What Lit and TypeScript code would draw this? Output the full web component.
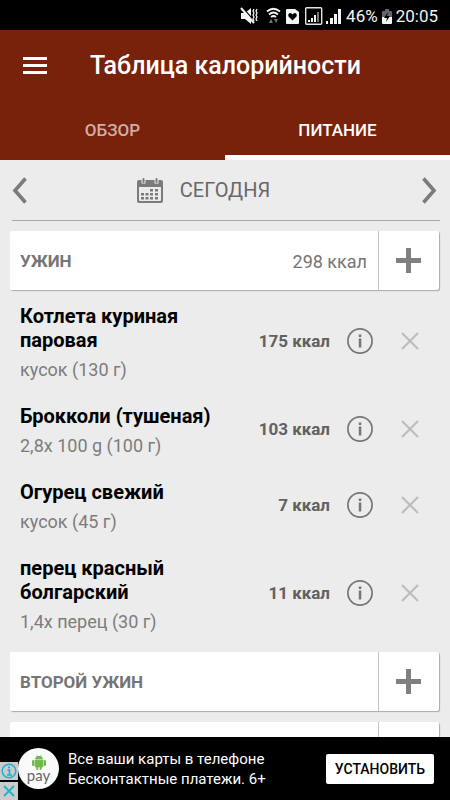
import { LitElement, html, svg, css, nothing } from "lit";
import { customElement, property } from "lit/decorators.js";

interface Food {
  name: string;
  portion: string;
  kcal: number;
}

const dinner: Food[] = [
  { name: "Котлета куриная паровая", portion: "кусок (130 г)", kcal: 175 },
  { name: "Брокколи (тушеная)", portion: "2,8x 100 g (100 г)", kcal: 103 },
  { name: "Огурец свежий", portion: "кусок (45 г)", kcal: 7 },
  { name: "перец красный болгарский", portion: "1,4x перец (30 г)", kcal: 11 },
];

const buttonReset = css`
  * {
    box-sizing: border-box;
  }
  button {
    margin: 0;
    padding: 0;
    border: 0;
    background: none;
    color: inherit;
    font: inherit;
    cursor: pointer;
    display: flex;
    align-items: center;
    justify-content: center;
  }
  svg {
    display: block;
    flex: none;
  }
`;

@customElement("status-bar")
export class StatusBar extends LitElement {
  static styles = css`
    :host {
      display: flex;
      align-items: center;
      justify-content: flex-end;
      flex: none;
      box-sizing: border-box;
      height: 30px;
      padding: 2px 12px 0 0;
      background: #000;
      color: #f4f4f4;
      font-size: 17px;
      line-height: 28px;
    }
    .icons {
      display: block;
      margin-right: 4px;
    }
    .battery {
      display: block;
      margin: 0 4px;
    }
  `;

  render() {
    return html`
      <svg class="icons" width="102" height="18" viewBox="0 0 102 18" fill="#f4f4f4" aria-hidden="true">
        <path d="M1 6h4l6-5v16l-6-5H1z" />
        <path d="M2 0l13 15" stroke="#000" stroke-width="1.500" />
        <path d="M1 1l13 15" stroke="#f4f4f4" stroke-width="2" />
        <path d="M14 2l-1 2 1 2-1 2 1 2-1 2 1 2M17 2l-1 2 1 2-1 2 1 2-1 2 1 2" fill="none" stroke="#f4f4f4" stroke-width="1.3" />
        <g fill="none" stroke="#f4f4f4" stroke-width="1.7">
          <path d="M27 4.500q6.500-5.500 13 0" />
          <path d="M29 7.500q4.500-4 9 0" />
          <path d="M31 10q2.500-2 5 0" />
        </g>
        <path d="M31 12l2 4h-4zM36 16l-2-4h4z" fill="#777" />
        <path d="M47 2h8l4 3v11q0 1-1 1H47q-1 0-1-1V3q0-1 1-1z" />
        <path d="M52.500 13.500L48.500 9.500q-1-3 1.500-3.500 1.700 0 2.500 1.500.8-1.500 2.500-1.500 2.500.5 1.500 3.500z" fill="#000" />
        <rect x="65.700" y="0.700" width="16" height="16.500" rx="1" fill="none" stroke="#e4e4e4" stroke-width="1.400" />
        <path d="M68 15v-2h2v2zM71 15v-4h2v4zM74 15V8h2v7z" />
        <path d="M77 15V5h2v10z" fill="#777" />
        <path d="M86 17v-3h2v3zM90 17v-6h3v6zM94 17V7h3v10zM98 17V2h3v15z" />
      </svg>
      <span>46%</span>
      <svg class="battery" width="10" height="15" viewBox="0 0 10 15" aria-hidden="true">
        <path d="M3 0h4v2h2q1 0 1 1v5H0V3q0-1 1-1h2z" fill="#666" />
        <path d="M0 8h10v6q0 1-1 1H1q-1 0-1-1z" fill="#f4f4f4" />
        <path d="M6 3L2 9h3l-1 4 4-6H5z" fill="#000" />
      </svg>
      <span>20:05</span>
    `;
  }
}

@customElement("meal-card")
export class MealCard extends LitElement {
  @property() name = "";
  @property({ type: Number }) total?: number;

  static styles = [
    buttonReset,
    css`
      :host {
        display: flex;
        flex: none;
        height: 59px;
        margin: 0 11px 0 10px;
        border-radius: 2px;
        background: #fff;
        box-shadow: 1px 1px 1px #aaa;
        color: #757575;
      }
      .label {
        flex: 1;
        display: flex;
        align-items: center;
        justify-content: space-between;
        padding: 1px 11px 0 10px;
        font-size: 18px;
      }
      .name {
        margin: 0;
        font-size: 17px;
        font-weight: 700;
      }
      .add {
        width: 61px;
        border-left: 1px solid #c4c4c4;
        color: #808080;
      }
    `,
  ];

  render() {
    return html`
      <div class="label">
        <h2 class="name">${this.name}</h2>
        ${this.total === undefined ? nothing : html`<span>${this.total} ккал</span>`}
      </div>
      <button class="add" aria-label="Добавить">
        <svg width="26" height="25" viewBox="0 0 26 25" fill="currentColor">
          <path d="M10 0h5v10h10v5H15v10h-5V15H0v-5h10z" />
        </svg>
      </button>
    `;
  }
}

@customElement("food-row")
export class FoodRow extends LitElement {
  @property({ attribute: false }) food!: Food;

  static styles = [
    buttonReset,
    css`
      :host {
        display: flex;
        align-items: center;
        flex: none;
        padding: 0 20px;
      }
      .text {
        flex: 1;
        max-width: 200px;
        margin-right: auto;
        padding: 13px 0 9px;
      }
      .name {
        margin: 0 0 6px;
        color: #000;
        font-size: 20px;
        line-height: 24px;
        font-weight: 700;
      }
      .portion {
        margin: 0;
        color: #7c7c7c;
        font-size: 18px;
        line-height: 24px;
      }
      .kcal {
        color: #616161;
        font-size: 17px;
        font-weight: 700;
        white-space: nowrap;
      }
      .info {
        width: 40px;
        height: 40px;
        margin: 0 10px;
        color: #757575;
      }
      .remove {
        width: 40px;
        height: 40px;
        color: #bdbdbd;
      }
    `,
  ];

  render() {
    return html`
      <div class="text">
        <h3 class="name">${this.food.name}</h3>
        <p class="portion">${this.food.portion}</p>
      </div>
      <span class="kcal">${this.food.kcal} ккал</span>
      <button class="info" aria-label="Информация">
        <svg width="26" height="26" viewBox="0 0 26 26">
          <circle cx="13" cy="13" r="12.100" fill="none" stroke="currentColor" stroke-width="1.700" />
          <path d="M11.800 10.500h2.500V19.500h-2.500zM11.800 6.500h2.500V9h-2.500z" fill="currentColor" />
        </svg>
      </button>
      <button class="remove" aria-label="Удалить">
        <svg width="18" height="18" viewBox="0 0 18 18" fill="none" stroke="currentColor" stroke-width="2.200">
          <path d="M1 1l16 16M17 1L1 17" />
        </svg>
      </button>
    `;
  }
}

@customElement("ad-banner")
export class AdBanner extends LitElement {
  static styles = [
    buttonReset,
    css`
      :host {
        display: flex;
        align-items: center;
        flex: none;
        height: 63px;
        padding-right: 16px;
        background: #000;
        color: #fff;
      }
      .choices {
        align-self: flex-end;
        display: flex;
        flex-direction: column;
        gap: 2px;
      }
      .choice {
        width: 18px;
        height: 18px;
        background: #ccc;
        color: #1fb0cf;
      }
      .logo {
        width: 41px;
        height: 41px;
        display: flex;
        flex-direction: column;
        align-items: center;
        padding-top: 7px;
        border-radius: 50%;
        background: #fafafa;
        color: #666;
        font-family: Lato, sans-serif;
        font-size: 15px;
        line-height: 10px;
      }
      .copy {
        flex: 1;
        margin: 0 0 0 9px;
        font-size: 15px;
        line-height: 20px;
      }
      .install {
        width: 108px;
        height: 30px;
        border-radius: 2px;
        background: #fff;
        color: #000;
        font-size: 14px;
        font-weight: 500;
      }
    `,
  ];

  render() {
    return html`
      <div class="choices">
        <button class="choice" aria-label="О рекламе">
          <svg width="16" height="16" viewBox="0 0 16 16" fill="none" stroke="currentColor">
            <circle cx="8" cy="8" r="6.800" stroke-width="1.500" />
            <path d="M6.500 7H8.500v5M6 12h5M7 4.300h2" stroke-width="1.700" />
          </svg>
        </button>
        <button class="choice" aria-label="Закрыть рекламу">
          <svg width="12" height="12" viewBox="0 0 12 12" stroke="currentColor" stroke-width="1.800">
            <path d="M1 1l10 10M11 1L1 11" />
          </svg>
        </button>
      </div>
      <div class="logo">
        <svg width="14" height="15" viewBox="0 0 14 15" fill="#72b84d" aria-hidden="true">
          <path d="M3 4.500Q3.200 2.200 5 1.300L4.300 0h.5l.8 1.100q1.400-.4 2.800 0L9.200 0h.5L9 1.300q1.800.9 2 3.200z" />
          <rect y="5" width="2.300" height="6" rx="1.100" />
          <rect x="11.700" y="5" width="2.300" height="6" rx="1.100" />
          <path d="M2.700 5h8.600v6.500q0 .8-1 .8H3.700q-1 0-1-.8z" />
          <rect x="4.300" y="10" width="2" height="5" rx="1" />
          <rect x="7.700" y="10" width="2" height="5" rx="1" />
        </svg>
        <span>pay</span>
      </div>
      <p class="copy">Все ваши карты в телефоне<br />Бесконтактные платежи. 6+</p>
      <button class="install">УСТАНОВИТЬ</button>
    `;
  }
}

const chevron = (d: string) => html`
  <svg width="15" height="27" viewBox="0 0 15 27" fill="none" stroke="currentColor" stroke-width="3.600">
    ${svg`<path d=${d} />`}
  </svg>
`;

@customElement("app-root")
export class AppRoot extends LitElement {
  static styles = [
    buttonReset,
    css`
      :host {
        display: flex;
        flex-direction: column;
        height: 100vh;
        overflow: hidden;
        background: #ececec;
        font-family: Roboto, "Noto Sans", sans-serif;
      }
      header {
        flex: none;
        background: #78220b;
        color: #fff;
      }
      .bar {
        display: flex;
        align-items: center;
        height: 72px;
        padding-left: 15px;
      }
      .menu {
        width: 40px;
        height: 40px;
      }
      .title {
        margin: 0 0 0 35px;
        font-size: 25px;
        line-height: 32px;
        font-weight: 500;
      }
      .tabs {
        display: grid;
        grid-template-columns: 1fr 1fr;
      }
      .tab {
        height: 58px;
        padding-top: 3px;
        border-bottom: 5px solid transparent;
        color: #d0aea5;
        font-size: 17px;
        font-weight: 500;
      }
      .tab[aria-selected="true"] {
        border-bottom-color: #fff;
        color: #fff;
      }
      main {
        flex: 1;
        min-height: 0;
        display: flex;
        flex-direction: column;
        overflow: hidden;
      }
      .dates {
        flex: none;
        display: flex;
        align-items: center;
        justify-content: space-between;
        height: 61px;
        margin: 0 10px 10px 12px;
        padding-right: 3px;
        border-bottom: 1px solid #a8a8a8;
        color: #7b7b7b;
      }
      .step {
        height: 60px;
      }
      .day {
        gap: 17px;
        padding-right: 42px;
        color: #686868;
        font-size: 20px;
      }
      .calendar {
        color: #7b7b7b;
      }
      .foods {
        flex: none;
        margin: 0 0 9px;
        padding: 1px 0 0;
        list-style: none;
      }
      .more {
        margin-top: 11px;
      }
    `,
  ];

  render() {
    return html`
      <status-bar></status-bar>
      <header>
        <div class="bar">
          <button class="menu" aria-label="Меню">
            <svg width="24" height="18" viewBox="0 0 24 18" fill="#fff">
              <path d="M0 0h24v3H0zM0 7h24v3H0zM0 14h24v3H0z" />
            </svg>
          </button>
          <h1 class="title">Таблица калорийности</h1>
        </div>
        <div class="tabs" role="tablist">
          <button class="tab" role="tab" aria-selected="false">ОБЗОР</button>
          <button class="tab" role="tab" aria-selected="true">ПИТАНИЕ</button>
        </div>
      </header>
      <main>
        <div class="dates">
          <button class="step" aria-label="Предыдущий день">${chevron("M13.500 1.500L3 13.500 13.500 25.500")}</button>
          <button class="day">
            <svg class="calendar" width="26" height="25" viewBox="0 0 26 25" fill="currentColor">
              <path d="M2 2h2.500v3.500h4V2h9v3.500h4V2H24q2 0 2 2v19q0 2-2 2H2q-2 0-2-2V4q0-2 2-2zM2 9v13q0 1 1 1h20q1 0 1-1V9z" fill-rule="evenodd" />
              <rect x="5.500" width="2" height="5" rx="1" />
              <rect x="18.500" width="2" height="5" rx="1" />
              <path d="M13 11h3v2.500h-3zM18 11h3v2.500h-3zM4 15h3v2.500H4zM8.500 15h3v2.500h-3zM13 15h3v2.500h-3zM18 15h3v2.500h-3zM4 19h3v2.500H4zM8.500 19h3v2.500h-3zM13 19h3v2.500h-3zM18 19h3v2.500h-3z" />
            </svg>
            СЕГОДНЯ
          </button>
          <button class="step" aria-label="Следующий день">${chevron("M1.500 1.500L12 13.500 1.500 25.500")}</button>
        </div>
        <meal-card name="УЖИН" total="298"></meal-card>
        <ul class="foods">
          ${dinner.map((food) => html`<li><food-row .food=${food}></food-row></li>`)}
        </ul>
        <meal-card name="ВТОРОЙ УЖИН"></meal-card>
        <meal-card class="more"></meal-card>
      </main>
      <ad-banner></ad-banner>
    `;
  }
}
